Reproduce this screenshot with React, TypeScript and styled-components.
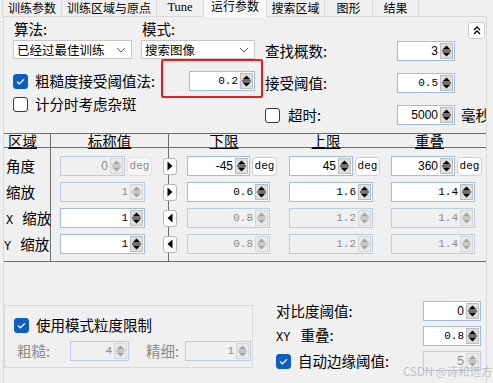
import React from 'react';
import styled, { createGlobalStyle } from 'styled-components';

const CJK = `"Noto Sans CJK SC", "Noto Sans", sans-serif`;
const MONO = `"Liberation Mono", "DejaVu Sans Mono", monospace`;
const SANS = `"Liberation Sans", "Noto Sans", sans-serif`;

const GlobalStyle = createGlobalStyle`
  html, body { margin: 0; padding: 0; background: #f0f0f0; }
  body { font-family: ${CJK}; color: #000; }
  * { box-sizing: border-box; }
`;

const Window = styled.div`
  width: 493px;
  height: 383px;
  overflow: hidden;
  position: relative;
  background: #f0f0f0;
`;

const TabBar = styled.div`
  display: flex;
  align-items: flex-end;
  height: 16px;
  padding-left: 2px;
  position: relative;
  z-index: 1;
`;

const Tab = styled.div<{ $w: number; $active?: boolean; $serif?: boolean }>`
  flex: none;
  width: ${p => p.$w}px;
  height: ${p => (p.$active ? 19 : 18)}px;
  margin-bottom: ${p => (p.$active ? -1 : 0)}px;
  border-right: 1px solid #d9d9d9;
  &:first-child { border-left: 1px solid #d9d9d9; }
  background: ${p => (p.$active ? '#f9f9f9' : '#f0f0f0')};
  display: flex;
  align-items: flex-end;
  justify-content: center;
  padding-bottom: ${p => (p.$active ? 5 : 2)}px;
  font-family: ${p => (p.$serif ? `"Liberation Serif", serif` : CJK)};
  font-size: ${p => (p.$serif ? 12.5 : 12)}px;
  line-height: 13px;
  white-space: nowrap;
`;

const Panel = styled.div`
  margin-left: 3px;
  width: 484px;
  height: 380px;
  border: 1px solid #d9d9d9;
  border-bottom: none;
  background: #f0f0f0;
  overflow: hidden;
`;

const TopSection = styled.div`
  display: flex;
`;

const LeftBlock = styled.div`
  width: 260px;
  flex: none;
  padding: 3px 9px 0;
  display: flex;
  flex-direction: column;
`;

const ComboRow = styled.div`
  display: flex;
  gap: 9px;
`;

const Field = styled.div<{ $w: number }>`
  width: ${p => p.$w}px;
  display: flex;
  flex-direction: column;
  gap: 3px;
`;

const Label = styled.span<{ $gray?: boolean; $w?: number }>`
  font-family: ${CJK};
  font-size: 14.5px;
  line-height: 20px;
  white-space: nowrap;
  color: ${p => (p.$gray ? '#8c8c8c' : '#000')};
  ${p => (p.$w ? `width: ${p.$w}px; flex: none;` : '')}
`;

const FieldLabel = styled(Label)`
  line-height: 17px;
  padding-left: 1px;
`;

const Combo = styled.div`
  height: 19px;
  border: 1px solid #c6c6c6;
  background: #fff;
  display: flex;
  align-items: center;
  justify-content: space-between;
  padding: 0 5px 0 3px;
  font-size: 12.5px;
  line-height: 17px;
  white-space: nowrap;
`;

const Line = styled.div<{ $mt: number }>`
  display: flex;
  align-items: center;
  justify-content: space-between;
  height: 20px;
  margin-top: ${p => p.$mt}px;
`;

const CheckLabel = styled.label<{ $gap?: number }>`
  display: flex;
  align-items: center;
  gap: ${p => p.$gap ?? 7}px;
  height: 20px;
  white-space: nowrap;
`;

const CheckBox = styled.span<{ $checked?: boolean }>`
  flex: none;
  width: 15px;
  height: 15px;
  border-radius: 3px;
  border: 1px solid ${p => (p.$checked ? '#0e5dc2' : '#3a3a3a')};
  background: ${p => (p.$checked ? '#0e5dc2' : '#fff')};
  display: inline-flex;
  align-items: center;
  justify-content: center;
`;

const Anchor = styled.div`
  position: relative;
`;

const RedMark = styled.div`
  position: absolute;
  left: -28px;
  right: -8px;
  top: -12px;
  bottom: -7px;
  border: 2px solid #e41e1e;
  border-radius: 2px;
  pointer-events: none;
`;

const RightBlock = styled.div`
  flex: 1;
  padding: 5px 0 0 1px;
  display: flex;
  flex-direction: column;
`;

const CollapseRow = styled.div`
  display: flex;
  justify-content: flex-end;
  padding-right: 5px;
`;

const CollapseBtn = styled.div`
  width: 17px;
  height: 17px;
  border: 1px solid #cdcdcd;
  border-radius: 3px;
  background: #fff;
  display: flex;
  align-items: center;
  justify-content: center;
`;

const ParamGrid = styled.div`
  margin-top: 2px;
  display: grid;
  grid-template-columns: 132px 58px auto;
  grid-auto-rows: 20px;
  row-gap: 12px;
  align-items: center;
`;

const Suffix = styled(Label)`
  margin-left: 6px;
`;

/* spin box */
const SpinBox = styled.div<{ $w: number; $disabled?: boolean }>`
  width: ${p => p.$w}px;
  height: 20px;
  flex: none;
  display: flex;
  border: 1px solid ${p => (p.$disabled ? '#bccde2' : '#a2bcdc')};
  background: ${p => (p.$disabled ? '#f0f0f0' : '#fff')};
`;

const SpinValue = styled.div<{ $mono?: boolean; $disabled?: boolean }>`
  flex: 1;
  text-align: right;
  padding-right: 2px;
  font-family: ${p => (p.$mono ? MONO : SANS)};
  font-size: ${p => (p.$mono ? 11 : 12)}px;
  line-height: 18px;
  color: ${p => (p.$disabled ? '#8c8c8c' : '#000')};
  white-space: nowrap;
`;

const SpinBtn = styled.div<{ $disabled?: boolean }>`
  width: 13px;
  margin: 1px 1px 1px 0;
  background: ${p => (p.$disabled ? '#e9e9e9' : '#dedede')};
  border: 1px solid ${p => (p.$disabled ? '#d6d6d6' : '#bdbdbd')};
  display: flex;
  align-items: center;
  justify-content: center;
`;

const Spin: React.FC<{ w: number; v: string; mono?: boolean; disabled?: boolean }> = ({ w, v, mono, disabled }) => {
  const c = disabled ? '#a3a3a3' : '#000';
  return (
    <SpinBox $w={w} $disabled={disabled}>
      <SpinValue $mono={mono} $disabled={disabled}>{v}</SpinValue>
      <SpinBtn $disabled={disabled}>
        <svg width="9" height="14" viewBox="0 0 9 14">
          <polygon points="0.5,5.5 4.5,1.5 8.5,5.5" fill={c} />
          <line x1="0" y1="7" x2="9" y2="7" stroke={c} strokeWidth="1" />
          <polygon points="0.5,8.5 8.5,8.5 4.5,12.5" fill={c} />
        </svg>
      </SpinBtn>
    </SpinBox>
  );
};

const Check: React.FC<{ checked?: boolean }> = ({ checked }) => (
  <CheckBox $checked={checked}>
    {checked && (
      <svg width="9" height="7" viewBox="0 0 9 7">
        <polyline points="1,3.5 3.3,5.8 8,1.2" fill="none" stroke="#fff" strokeWidth="1.2" />
      </svg>
    )}
  </CheckBox>
);

const Chevron = () => (
  <svg width="10" height="6" viewBox="0 0 10 6">
    <polyline points="1,1 5,5 9,1" fill="none" stroke="#5a5a5a" strokeWidth="1" />
  </svg>
);

/* table */
const Table = styled.div`
  margin-top: 8px;
  border-top: 1px solid #6d6d6d;
  border-bottom: 1px solid #6d6d6d;
`;

const HeadRow = styled.div`
  display: grid;
  grid-template-columns: 46px 118px 111px 94px 1fr;
  height: 14px;
  border-bottom: 1px solid #6d6d6d;
`;

const HeadCell = styled.div<{ $left?: boolean; $line?: boolean }>`
  font-size: 14.5px;
  line-height: 13px;
  text-align: ${p => (p.$left ? 'left' : 'center')};
  padding-left: ${p => (p.$left ? 4 : 0)}px;
  border-left: ${p => (p.$line ? '1px solid #6d6d6d' : 'none')};
  white-space: nowrap;
  & > span {
    text-decoration: underline;
    text-underline-offset: 1px;
    text-decoration-thickness: 1px;
  }
`;

const Body = styled.div`
  display: grid;
  grid-template-columns: 46px 113px 24px 102px 102px 1fr;
  grid-auto-rows: 20px;
  row-gap: 6px;
  padding: 8px 0 7px;
  background:
    linear-gradient(#6d6d6d, #6d6d6d) 46px 0 / 1px 100% no-repeat,
    linear-gradient(#6d6d6d, #6d6d6d) 164px 0 / 1px 100% no-repeat;
`;

const RowLabel = styled.div<{ $pl: number }>`
  display: block;
  padding-left: ${p => p.$pl}px;
  font-size: 14.5px;
  line-height: 20px;
  white-space: nowrap;
  overflow: visible;
`;

const Latin = styled.span<{ $mr?: number }>`
  font-family: ${MONO};
  font-size: 12px;
  margin-right: ${p => p.$mr ?? 9}px;
`;

const Cell = styled.div<{ $pl?: number }>`
  display: flex;
  align-items: center;
  gap: 2px;
  padding-left: ${p => p.$pl ?? 0}px;
`;

const DegBtn = styled.div<{ $disabled?: boolean }>`
  width: 25px;
  height: 19px;
  flex: none;
  border: 1px solid ${p => (p.$disabled ? '#e2e2e2' : '#cfcfcf')};
  border-radius: 4px;
  background: ${p => (p.$disabled ? '#f6f6f6' : '#fff')};
  color: ${p => (p.$disabled ? '#8c8c8c' : '#000')};
  font-family: ${MONO};
  font-size: 11px;
  line-height: 17px;
  text-align: center;
`;

const ArrowBtn = styled.div`
  width: 14px;
  height: 17px;
  border: 1px solid #b8b8b8;
  border-radius: 3px;
  background: #fff;
  display: flex;
  align-items: center;
  justify-content: center;
`;

const Arrow: React.FC<{ dir: 'r' | 'l' }> = ({ dir }) => (
  <ArrowBtn>
    <svg width="6" height="10" viewBox="0 0 6 10">
      {dir === 'r' ? <polygon points="0.5,0.5 5.5,5 0.5,9.5" fill="#000" /> : <polygon points="5.5,0.5 0.5,5 5.5,9.5" fill="#000" />}
    </svg>
  </ArrowBtn>
);

/* bottom */
const BottomSection = styled.div`
  display: flex;
  align-items: flex-start;
`;

const GroupBox = styled.div`
  width: 249px;
  margin-top: 43px;
  border: 1px solid #d9d9d9;
  padding: 9px 0 6px 9px;
  display: flex;
  flex-direction: column;
  gap: 6px;
`;

const GroupRow = styled.div`
  display: flex;
  align-items: center;
  height: 20px;
`;

const GroupLabel = styled(Label)<{ $pl: number }>`
  padding-left: ${p => p.$pl}px;
`;

const RightCol = styled.div`
  margin-left: 23px;
  margin-top: 39px;
  display: grid;
  grid-template-columns: 147px 58px;
  grid-auto-rows: 20px;
  row-gap: 5px;
  align-items: center;
`;

const Watermark = styled.div`
  position: absolute;
  left: 403px;
  top: 364px;
  font-family: ${CJK};
  font-size: 11.5px;
  line-height: 14px;
  color: rgba(150, 150, 150, 0.55);
  white-space: nowrap;
  pointer-events: none;
`;

const tabs = [
  { t: '训练参数', w: 60 },
  { t: '训练区域与原点', w: 95 },
  { t: 'Tune', w: 47, serif: true },
  { t: '运行参数', w: 63, active: true },
  { t: '搜索区域', w: 58 },
  { t: '图形', w: 48 },
  { t: '结果', w: 46 },
];

type RowDef = {
  label: React.ReactNode;
  pl: number;
  dir: 'r' | 'l';
  deg: boolean;
  nominalDisabled: boolean;
  mono: boolean;
  vals: [string, string, string, string];
};

const rows: RowDef[] = [
  { label: '角度', pl: 2, dir: 'r', deg: true, nominalDisabled: true, mono: false, vals: ['0', '-45', '45', '360'] },
  { label: '缩放', pl: 2, dir: 'r', deg: false, nominalDisabled: true, mono: true, vals: ['1', '0.6', '1.6', '1.4'] },
  { label: <><Latin>X</Latin>缩放</>, pl: 2, dir: 'l', deg: false, nominalDisabled: false, mono: true, vals: ['1', '0.8', '1.2', '1.4'] },
  { label: <><Latin>Y</Latin>缩放</>, pl: 0, dir: 'l', deg: false, nominalDisabled: false, mono: true, vals: ['1', '0.8', '1.2', '1.4'] },
];

export default function App() {
  return (
    <>
      <GlobalStyle />
      <Window>
        <TabBar>
          {tabs.map(t => (
            <Tab key={t.t} $w={t.w} $active={t.active} $serif={t.serif}>{t.t}</Tab>
          ))}
        </TabBar>
        <Panel>
          <TopSection>
            <LeftBlock>
              <ComboRow>
                <Field $w={119}>
                  <FieldLabel>算法:</FieldLabel>
                  <Combo><span>已经过最佳训练</span><Chevron /></Combo>
                </Field>
                <Field $w={114}>
                  <FieldLabel>模式:</FieldLabel>
                  <Combo><span>搜索图像</span><Chevron /></Combo>
                </Field>
              </ComboRow>
              <Line $mt={12}>
                <CheckLabel><Check checked /><Label>粗糙度接受阈值法:</Label></CheckLabel>
                <Anchor>
                  <Spin w={66} v="0.2" mono />
                  <RedMark />
                </Anchor>
              </Line>
              <Line $mt={3}>
                <CheckLabel><Check /><Label>计分时考虑杂斑</Label></CheckLabel>
              </Line>
            </LeftBlock>
            <RightBlock>
              <CollapseRow>
                <CollapseBtn>
                  <svg width="8" height="9" viewBox="0 0 8 9">
                    <polyline points="1,4 4,1 7,4" fill="none" stroke="#000" strokeWidth="1.3" />
                    <polyline points="1,8 4,5 7,8" fill="none" stroke="#000" strokeWidth="1.3" />
                  </svg>
                </CollapseBtn>
              </CollapseRow>
              <ParamGrid>
                <Label>查找概数:</Label>
                <Spin w={58} v="3" />
                <span />
                <Label>接受阈值:</Label>
                <Spin w={58} v="0.5" mono />
                <span />
                <CheckLabel $gap={8}><Check /><Label>超时:</Label></CheckLabel>
                <Spin w={58} v="5000" />
                <Suffix>毫秒</Suffix>
              </ParamGrid>
            </RightBlock>
          </TopSection>

          <Table>
            <HeadRow>
              <HeadCell $left><span>区域</span></HeadCell>
              <HeadCell $line><span>标称值</span></HeadCell>
              <HeadCell $line><span>下限</span></HeadCell>
              <HeadCell><span>上限</span></HeadCell>
              <HeadCell><span>重叠</span></HeadCell>
            </HeadRow>
            <Body>
              {rows.map((r, i) => {
                const w = r.deg ? 64 : 84;
                const otherDisabled = !r.nominalDisabled;
                return (
                  <React.Fragment key={i}>
                    <RowLabel $pl={r.pl}>{r.label}</RowLabel>
                    <Cell $pl={10}>
                      <Spin w={r.deg ? 65 : 85} v={r.vals[0]} mono={r.mono} disabled={r.nominalDisabled} />
                      {r.deg && <DegBtn $disabled>deg</DegBtn>}
                    </Cell>
                    <Cell><Arrow dir={r.dir} /></Cell>
                    {[1, 2, 3].map(k => (
                      <Cell key={k}>
                        <Spin w={k === 1 ? w - 1 : w} v={r.vals[k]} mono={r.mono} disabled={otherDisabled} />
                        {r.deg && <DegBtn>deg</DegBtn>}
                      </Cell>
                    ))}
                  </React.Fragment>
                );
              })}
            </Body>
          </Table>

          <BottomSection>
            <GroupBox>
              <CheckLabel><Check checked /><Label>使用模式粒度限制</Label></CheckLabel>
              <GroupRow>
                <GroupLabel $gray $w={56} $pl={3}>粗糙:</GroupLabel>
                <Spin w={59} v="4" mono disabled />
                <GroupLabel $gray $w={56} $pl={17}>精细:</GroupLabel>
                <Spin w={66} v="1" mono disabled />
              </GroupRow>
            </GroupBox>
            <RightCol>
              <Label>对比度阈值:</Label>
              <Spin w={58} v="0" />
              <Label><Latin $mr={10}>XY</Latin>重叠:</Label>
              <Spin w={58} v="0.8" mono />
              <CheckLabel><Check checked /><Label>自动边缘阈值:</Label></CheckLabel>
              <Spin w={58} v="5" disabled />
            </RightCol>
          </BottomSection>
        </Panel>
        <Watermark>CSDN @诗和远方ys</Watermark>
      </Window>
    </>
  );
}
